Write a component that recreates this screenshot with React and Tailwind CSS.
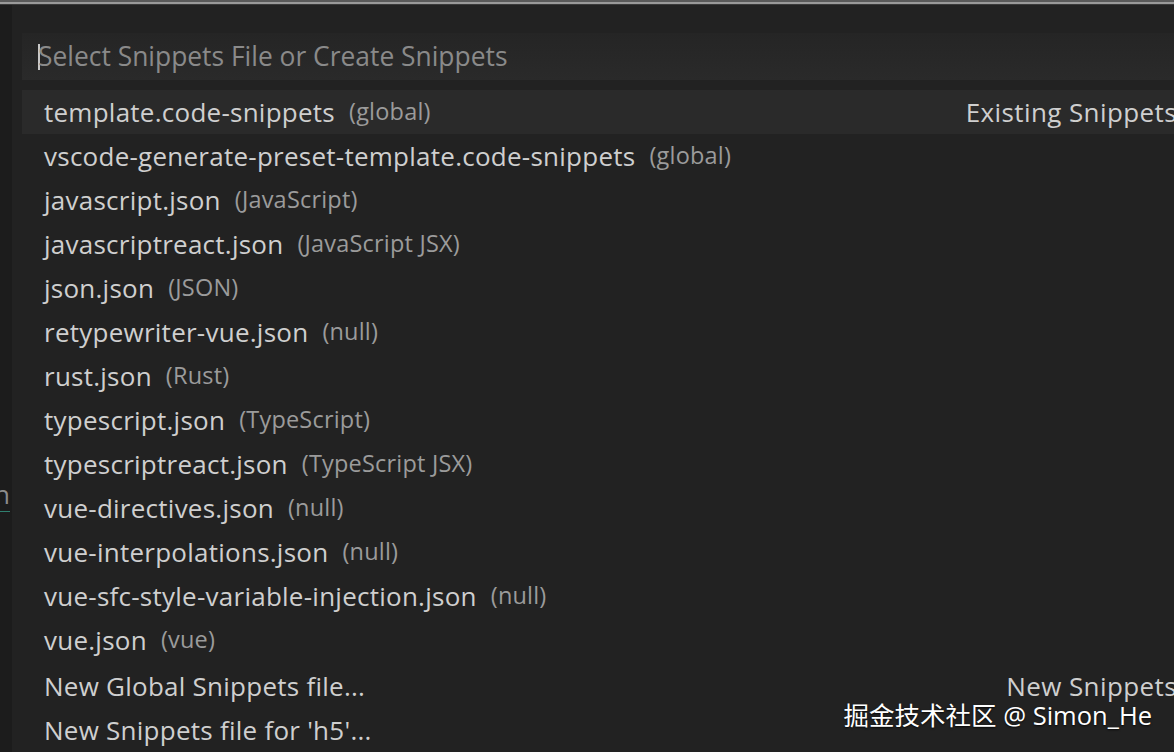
import React from 'react';

const items = [
  ['template.code-snippets', '(global)'],
  ['vscode-generate-preset-template.code-snippets', '(global)'],
  ['javascript.json', '(JavaScript)'],
  ['javascriptreact.json', '(JavaScript JSX)'],
  ['json.json', '(JSON)'],
  ['retypewriter-vue.json', '(null)'],
  ['rust.json', '(Rust)'],
  ['typescript.json', '(TypeScript)'],
  ['typescriptreact.json', '(TypeScript JSX)'],
  ['vue-directives.json', '(null)'],
  ['vue-interpolations.json', '(null)'],
  ['vue-sfc-style-variable-injection.json', '(null)'],
  ['vue.json', '(vue)'],
];

const Row = ({ label, desc, right, selected, className = '' }) => (
  <div
    className={`flex items-center h-[44px] pl-[22px] pr-0 ${selected ? 'bg-[#2a2a2a]' : ''} ${className}`}
  >
    <span className="text-[#cfcfcf] text-[26px] tracking-[0.25px] leading-none whitespace-nowrap">{label}</span>
    {desc && <span className="ml-[14px] text-[#9b9b9b] text-[23.5px] tracking-[0.2px] leading-none whitespace-nowrap">{desc}</span>}
    {right && <span className="ml-auto text-[#cfcfcf] text-[26px] tracking-[0.4px] leading-none whitespace-nowrap mr-[-3px]">{right}</span>}
  </div>
);

export default function App() {
  return (
    <div
      className="w-[1174px] h-[752px] overflow-hidden bg-[#222222] flex flex-col"
      style={{ fontFamily: '"Open Sans", "Noto Sans CJK SC", sans-serif' }}
    >
      <div className="h-[2px] bg-[#5a5a5a]" />
      <div className="h-[2px] bg-[#9a9a9a]" />
      <div className="h-[1px] bg-[#3a3a3a]" />
      <div className="flex flex-1 min-h-0">
        {/* editor behind */}
        <div className="w-[12px] bg-[#1c1c1c] flex flex-col shrink-0 overflow-hidden">
          <div className="h-[475px]" />
          <span className="text-[#8c8c8c] text-[26px] leading-[28px] ml-[-6px]">n</span>
          <div className="h-[1px] w-[10px] bg-[#2f7f6f] mt-[3px]" />
        </div>
        {/* quick pick */}
        <div className="flex-1 bg-[#222222] flex flex-col pl-[10px] relative">
          <div className="mt-[28px] h-[47px] bg-gradient-to-b from-[#252525] to-[#2a2a2a] flex items-center pl-[16px]">
            <div className="w-[2px] h-[26px] bg-[#c8c8c8]" />
            <span className="text-[#8a8a8a] text-[26.4px] leading-none ml-[-2px] whitespace-nowrap">
              Select Snippets File or Create Snippets
            </span>
          </div>
          <div className="mt-[10px] flex flex-col">
            {items.map(([l, d], i) => (
              <Row
                key={l}
                label={l}
                desc={d}
                selected={i === 0}
                right={i === 0 ? 'Existing Snippets' : null}
              />
            ))}
            <Row label="New Global Snippets file..." right="New Snippets" className="mt-[2px]" />
            <Row label="New Snippets file for 'h5'..." className="h-[40px]" />
          </div>
          <div
            className="absolute right-[22px] bottom-[24px] text-white text-[25.5px] leading-none whitespace-nowrap"
            style={{ textShadow: '0 1px 2px rgba(0,0,0,0.8)' }}
          >
            掘金技术社区 @ Simon_He
          </div>
        </div>
      </div>
    </div>
  );
}
